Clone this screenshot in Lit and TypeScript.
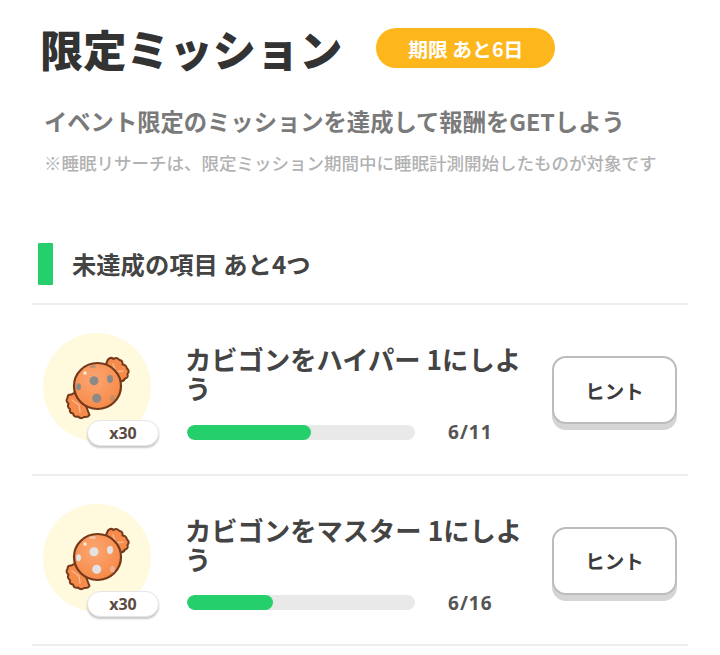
import { LitElement, html, css, svg } from "lit";
import { customElement } from "lit/decorators.js";

const candy = (dot: string, id: string) => svg`
<svg class="candy" viewBox="0 0 64 64" width="64" height="64" aria-hidden="true">
  <defs>
    <radialGradient id="b${id}" cx="0.42" cy="0.36" r="0.75">
      <stop offset="0" stop-color="#fca672"/><stop offset="0.75" stop-color="#f78e4e"/><stop offset="1" stop-color="#f27f3a"/>
    </radialGradient>
  </defs>
  <g stroke="#74391b" stroke-width="2" stroke-linejoin="round" fill="#f68c4c">
    <path d="M40 7 L42 2.5 Q45 -.5 47.5 2 Q51 -.5 53.5 3 Q57 3.5 56.5 7.5 Q60 7.5 61 11.5 Q64 14 61.5 17 Q62.5 21 59 21.5 Q57.5 25 53 24 L46 20 Z"/>
    <path d="M12 36.5 Q8 35 5.5 37.5 Q1.5 37 1.5 41 Q-.8 44 2.5 46.5 Q.8 50 4 52 Q3 56 7 56.5 Q8 60.5 12 59.5 Q15 62.5 18 60 Q22 60.5 23.5 58 L20 49 Z"/>
  </g>
  <path d="M47 7 L50 15 L57 14" fill="none" stroke="#fbb78e" stroke-width="1.4" stroke-linecap="round"/>
  <path d="M6 43 L13 48 L14 55" fill="none" stroke="#fbb78e" stroke-width="1.4" stroke-linecap="round"/>
  <ellipse cx="31.5" cy="29" rx="23.5" ry="23" fill="url(#b${id})" stroke="#74391b" stroke-width="2.2"/>
  <g fill="${dot}">
    <circle cx="28" cy="23.7" r="4.5"/>
    <circle cx="30.7" cy="41.3" r="4.5"/>
    <ellipse cx="44" cy="22" rx="3" ry="4"/>
    <ellipse cx="12.6" cy="29.7" rx="2.4" ry="3.5"/>
    <ellipse cx="46.5" cy="41.3" rx="2.4" ry="3.2" opacity="0.45"/>
    <ellipse cx="26.7" cy="9.6" rx="3.4" ry="1.6" opacity="0.55"/>
  </g>
  <circle cx="19" cy="16" r="1.8" fill="#ffe9da"/>
</svg>`;

const items = [
  { title: "カビゴンをハイパー 1にしよう", cur: 6, max: 11, dot: "#8b8a86", id: "a" },
  { title: "カビゴンをマスター 1にしよう", cur: 6, max: 16, dot: "#e3e3e6", id: "c" },
];

@customElement("app-root")
export class AppRoot extends LitElement {
  static styles = css`
    :host {
      display: block;
      width: 720px;
      height: 655px;
      overflow: hidden;
      background: #fff;
      font-family: "Noto Sans CJK JP", "Noto Sans", sans-serif;
      color: #3c3c3c;
    }
    .page { padding: 20px 32px 0; }
    .head { display: flex; align-items: center; gap: 34px; padding-left: 8px; height: 56px; }
    h1 { margin: 0; font-size: 43.2px; line-height: 56px; font-weight: 900; color: #333; white-space: nowrap; }
    .pill {
      width: 179px; height: 40px; border-radius: 20px; background: #fdb71c; color: #fff;
      font-size: 19.8px; font-weight: 700; display: flex; align-items: center; justify-content: center;
    }
    .sub { margin: 28px 0 0 12px; font-size: 23.3px; line-height: 34px; font-weight: 700; color: #7a7a7a; white-space: nowrap; }
    .note { margin: 12px 0 0 12px; font-size: 17.5px; line-height: 26px; font-weight: 500; color: #b2b2b2; white-space: nowrap; }
    .section { display: flex; align-items: center; gap: 19px; margin: 67px 0 0 6px; height: 42px; }
    .mark { width: 15px; height: 42px; background: #25cf6c; border-radius: 1px; }
    h2 { margin: 0; font-size: 24.3px; line-height: 32px; font-weight: 700; color: #444; white-space: nowrap; }
    .list { margin-top: 18px; border-top: 2px solid #eeeeee; }
    .row {
      display: grid; grid-template-columns: 109px 1fr 125px;
      height: 170.5px; box-sizing: border-box; padding: 28px 11px 0;
      border-bottom: 2px solid #eeeeee;
    }
    .reward { position: relative; width: 108px; height: 108px; border-radius: 50%; background: #fff9dd;
      display: flex; align-items: center; justify-content: center; }
    .candy { display: block; margin-top: 4px; margin-left: 2px; overflow: visible; }
    .badge {
      position: absolute; left: 44px; top: 87px; width: 72px; height: 26px; box-sizing: border-box;
      border-radius: 13px; background: #fff; border: 1px solid #e6e6e6; box-shadow: 0 2px 2px rgba(0,0,0,.22);
      font-family: "Noto Sans", sans-serif; font-size: 16px; font-weight: 700; color: #5a4a42;
      display: flex; align-items: center; justify-content: center;
    }
    .info { margin-left: 33px; width: 342px; padding-top: 11px; }
    .title { font-size: 26.3px; line-height: 29px; font-weight: 700; color: #444; }
    .progress { display: flex; align-items: center; gap: 33px; margin-top: 18px; padding-left: 2px; }
    .bar { width: 228px; height: 15px; border-radius: 8px; background: #e9e9e9; overflow: hidden; }
    .fill { height: 100%; background: #25cf6c; border-radius: 8px; }
    .count { font-family: "Noto Sans", sans-serif; font-size: 19px; line-height: 24px; font-weight: 700; color: #555; letter-spacing: 1px; }
    .hint {
      align-self: start; margin-top: 23px; width: 125px; height: 68px; box-sizing: border-box; padding: 0;
      border: 2px solid #bcbcbc; border-radius: 14px; background: #fff; box-shadow: 0 6px 0 #d5d5d5;
      font-family: inherit; font-size: 19.5px; font-weight: 700; color: #3c3c3c;
    }
  `;

  render() {
    return html`
      <div class="page">
        <div class="head">
          <h1>限定ミッション</h1>
          <div class="pill">期限 あと6日</div>
        </div>
        <div class="sub">イベント限定のミッションを達成して報酬をGETしよう</div>
        <div class="note">※睡眠リサーチは、限定ミッション期間中に睡眠計測開始したものが対象です</div>
        <div class="section"><span class="mark"></span><h2>未達成の項目 あと4つ</h2></div>
        <div class="list">
          ${items.map((it) => html`
            <div class="row">
              <div class="reward">${candy(it.dot, it.id)}<span class="badge">x30</span></div>
              <div class="info">
                <div class="title">${it.title}</div>
                <div class="progress">
                  <div class="bar"><div class="fill" style="width:${(it.cur / it.max) * 100}%"></div></div>
                  <span class="count">${it.cur}/${it.max}</span>
                </div>
              </div>
              <button class="hint">ヒント</button>
            </div>`)}
        </div>
      </div>
    `;
  }
}
